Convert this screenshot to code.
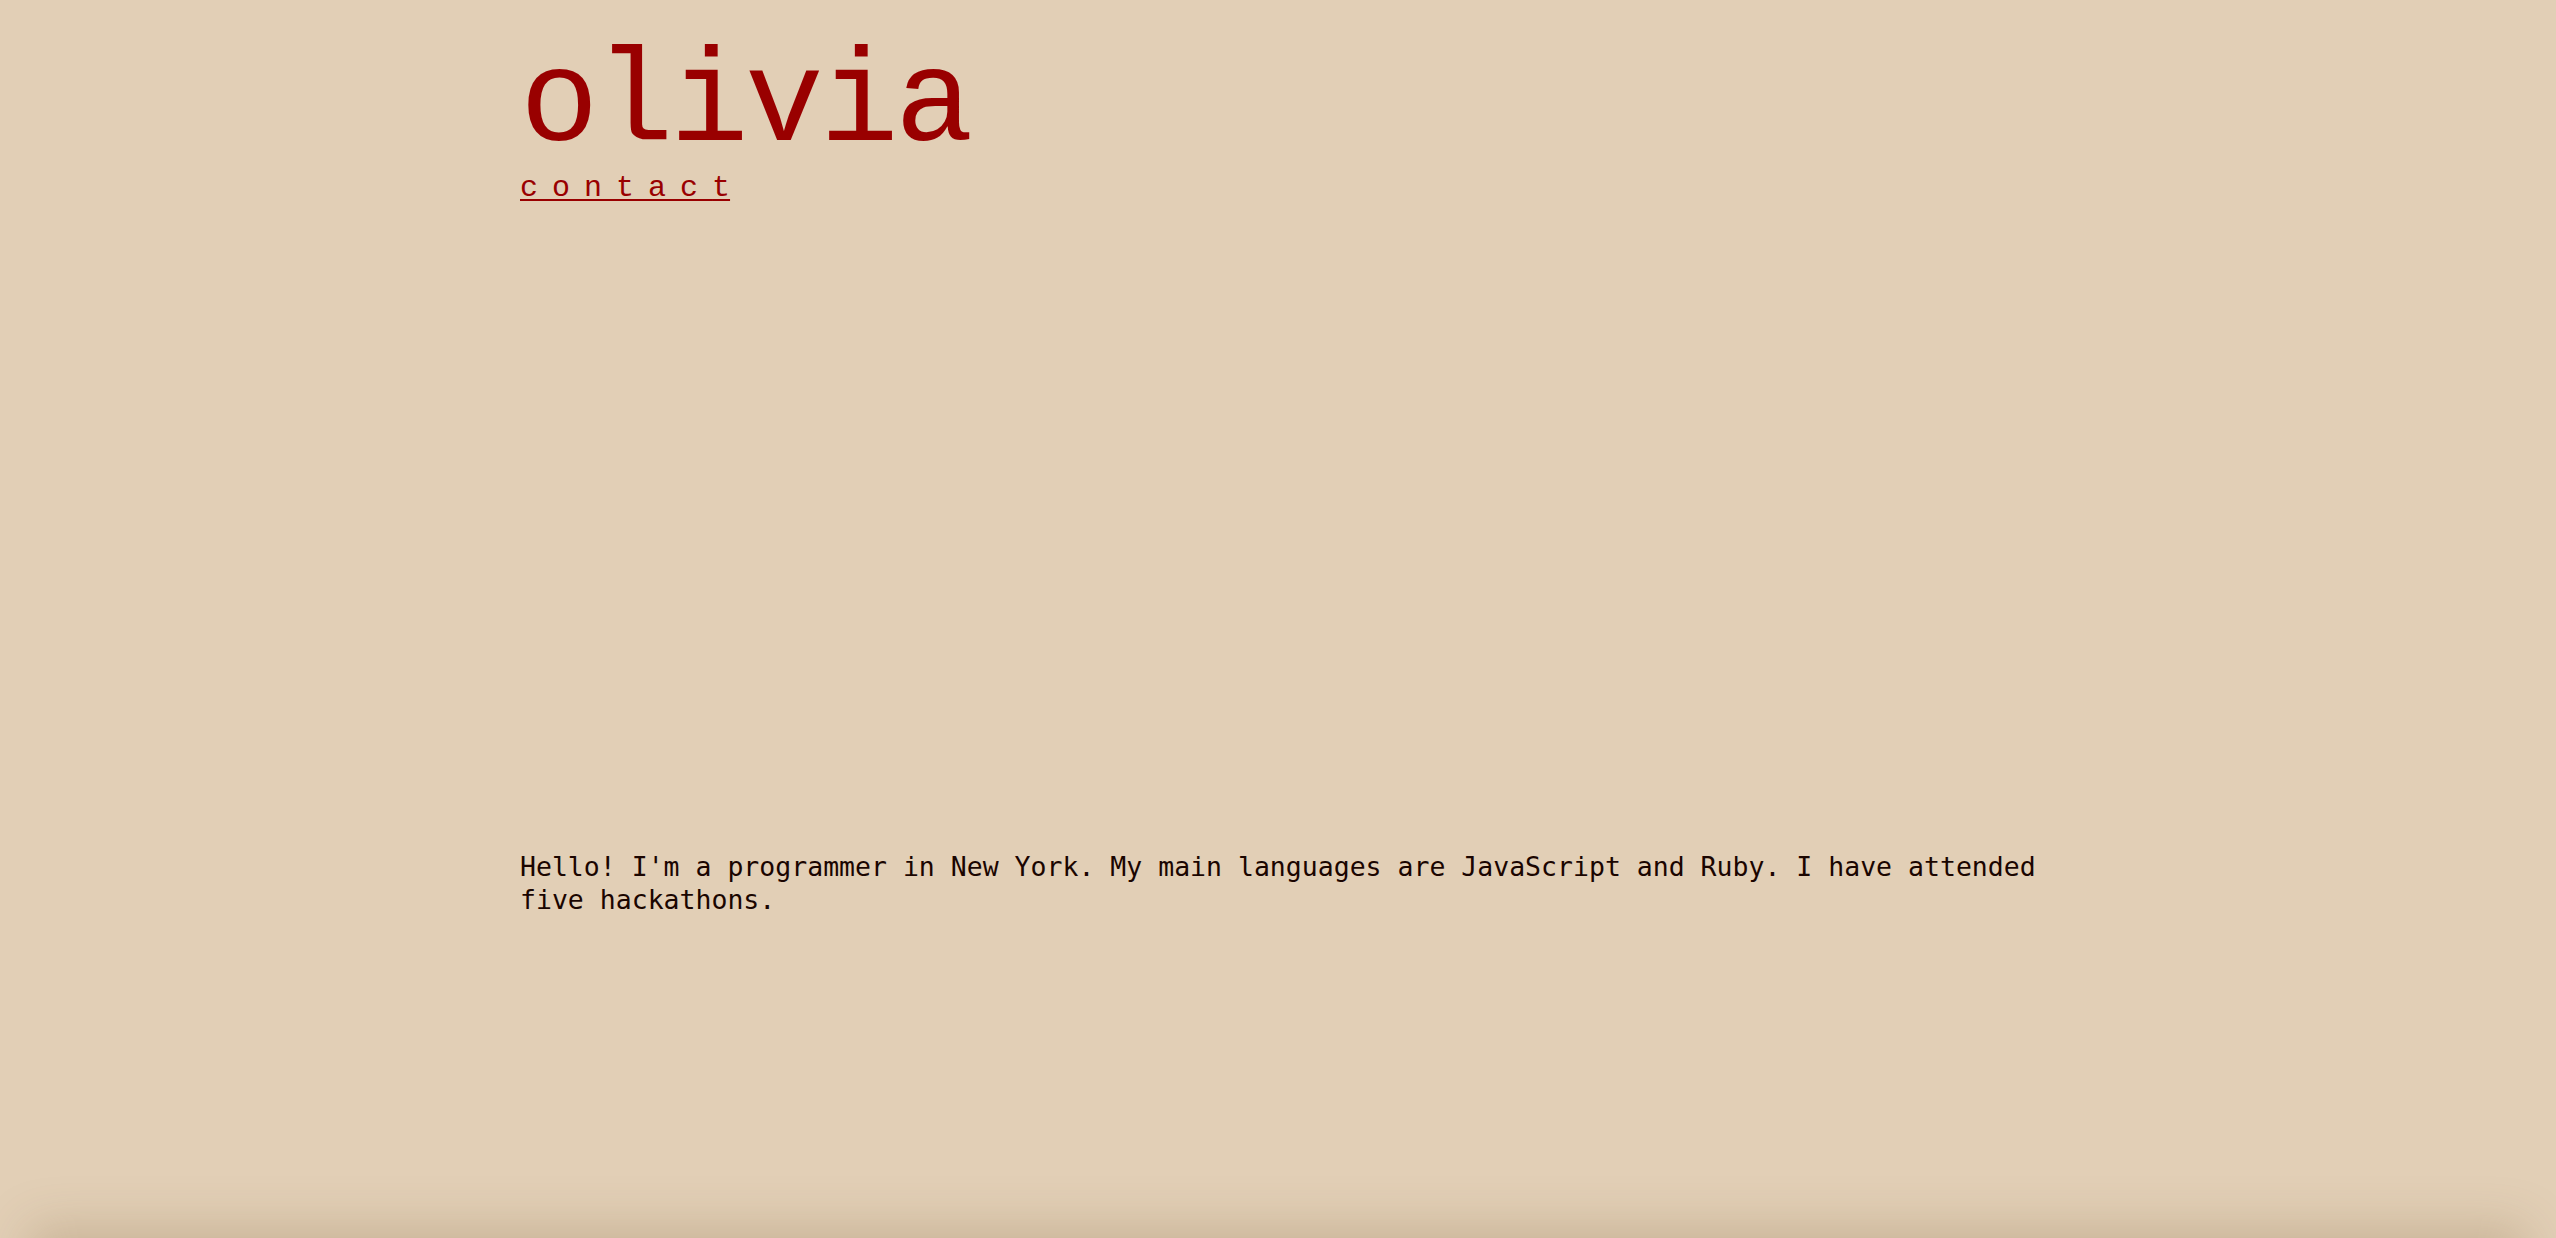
import React from 'react';

const App: React.FC = () => {
  return (
    <div className="relative min-h-screen w-full overflow-hidden bg-[#e2cfb6]">
      <div className="ml-[520px] w-[1560px] pt-[40px]">
        {/* Header */}
        <h1 className="font-['Liberation_Mono',monospace] text-[131px] leading-none tracking-[-3.6px] text-[#990000]">
          olivia
        </h1>
        <a
          href="#"
          className="mt-[2px] block w-fit font-['Liberation_Mono',monospace] text-[30px] leading-none text-[#990000] underline decoration-2 underline-offset-[3px]"
        >
          <span className="tracking-[14px]">contac</span>t
        </a>

        {/* About */}
        <p className="mt-[647px] font-['DejaVu_Sans_Mono',monospace] text-[26.5px] leading-[33px] text-[#1a0500]">
          Hello! I'm a programmer in New York. My main languages are JavaScript and Ruby. I have attended five hackathons.
        </p>
      </div>

      {/* Bottom shade */}
      <div className="pointer-events-none absolute -bottom-[60px] left-[40px] right-[40px] h-[60px] shadow-[0_0_50px_10px_rgba(120,90,50,0.25)]"></div>
    </div>
  );
};

export default App;
